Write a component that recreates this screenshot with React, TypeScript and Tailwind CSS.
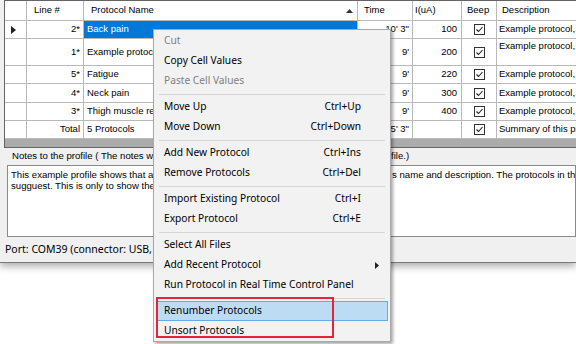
import React from "react";

type Row = {
  line: string;
  name: string;
  time: string;
  amp: string;
  desc: string;
  h: string;
  selected?: boolean;
  descTop?: boolean;
};

const rows: Row[] = [
  { line: "2*", name: "Back pain", time: "10' 3\"", amp: "100", desc: "Example protocol, not a real treatment", h: "h-[18px]", selected: true },
  { line: "1*", name: "Example protocol", time: "9'", amp: "200", desc: "Example protocol, not a real treatment", h: "h-[27px]", descTop: true },
  { line: "5*", name: "Fatigue", time: "9'", amp: "220", desc: "Example protocol, not a real treatment", h: "h-[18px]" },
  { line: "4*", name: "Neck pain", time: "9'", amp: "300", desc: "Example protocol, not a real treatment", h: "h-[19px]" },
  { line: "3*", name: "Thigh muscle relaxation", time: "9'", amp: "400", desc: "Example protocol, not a real treatment", h: "h-[18px]" },
];

type MenuEntry =
  | { sep: true }
  | { sep?: false; label: string; shortcut?: string; disabled?: boolean; sub?: boolean; hot?: boolean };

const menu: MenuEntry[] = [
  { label: "Cut", disabled: true },
  { label: "Copy Cell Values" },
  { label: "Paste Cell Values", disabled: true },
  { sep: true },
  { label: "Move Up", shortcut: "Ctrl+Up" },
  { label: "Move Down", shortcut: "Ctrl+Down" },
  { sep: true },
  { label: "Add New Protocol", shortcut: "Ctrl+Ins" },
  { label: "Remove Protocols", shortcut: "Ctrl+Del" },
  { sep: true },
  { label: "Import Existing Protocol", shortcut: "Ctrl+I" },
  { label: "Export Protocol", shortcut: "Ctrl+E" },
  { sep: true },
  { label: "Select All Files" },
  { label: "Add Recent Protocol", sub: true },
  { label: "Run Protocol in Real Time Control Panel" },
  { sep: true },
  { label: "Renumber Protocols", hot: true },
  { label: "Unsort Protocols" },
];

const cell = "border-r border-b border-[#b9b9b9] flex items-center overflow-hidden whitespace-nowrap shrink-0";

function Check() {
  return (
    <svg width="11" height="11" viewBox="0 0 11 11" className="shrink-0">
      <rect x="0.5" y="0.5" width="10" height="10" fill="#fff" stroke="#333" />
      <path d="M2.5 5.5 L4.5 7.5 L8.5 3" fill="none" stroke="#222" strokeWidth="1.1" />
    </svg>
  );
}

function GridRow({ r }: { r: Row }) {
  return (
    <div className={`flex ${r.h}`}>
      <div className={`${cell} w-[22px] justify-center bg-white`}>
        {r.selected && (
          <svg width="5" height="8" viewBox="0 0 5 8" className="ml-[-4px]">
            <path d="M0 0 L5 4 L0 8 Z" fill="#222" />
          </svg>
        )}
      </div>
      <div className={`${cell} w-[57px] justify-end pr-[3px]`}>{r.line}</div>
      <div className={`${cell} w-[274px] pl-[3px] ${r.selected ? "bg-[#0078d7] text-white" : ""}`}>{r.name}</div>
      <div className={`${cell} w-[55px] justify-end pr-[3px]`}>{r.time}</div>
      <div className={`${cell} w-[49px] justify-end pr-[4px]`}>{r.amp}</div>
      <div className={`${cell} w-[35px] justify-center`}>
        <Check />
      </div>
      <div className={`${cell} w-[120px] pl-[2px] ${r.descTop ? "items-start" : ""}`}>{r.desc}</div>
    </div>
  );
}

function ContextMenu() {
  return (
    <div className="absolute left-[153px] top-[29px] w-[238px] bg-[#f2f2f2] border border-[#a8a8a8] pt-[1px] shadow-[2px_2px_3px_rgba(0,0,0,0.35)] font-['Noto_Sans',sans-serif] text-[10.2px] text-black">
      {menu.map((m, i) =>
        m.sep ? (
          <div key={i} className="h-[6px] flex items-center px-[5px]">
            <div className="h-px w-full bg-[#d5d5d5]" />
          </div>
        ) : (
          <div key={i} className="h-[20px] px-[2px]">
            <div
              className={`h-full flex items-center pl-[7px] pr-[26px] border ${
                m.hot ? "bg-[#bcdcf4] border-[#6aa9e0]" : "border-transparent"
              } ${m.disabled ? "text-[#808080]" : ""} relative`}
            >
              <span className="flex-1">{m.label}</span>
              {m.shortcut && <span>{m.shortcut}</span>}
              {m.sub && (
                <svg width="4" height="7" viewBox="0 0 4 7" className="absolute right-[8px] top-[6px]">
                  <path d="M0 0 L4 3.5 L0 7 Z" fill="#222" />
                </svg>
              )}
            </div>
          </div>
        )
      )}
    </div>
  );
}

export default function App() {
  return (
    <div className="relative w-[576px] h-[344px] bg-white overflow-hidden">
      <div className="h-[263px] bg-[#f0f0f0] border-b border-[#7a7a7a] shadow-[0_3px_8px_rgba(0,0,0,0.35)] flex flex-col">
        {/* protocol grid */}
        <div className="ml-[4px] h-[148px] border-l border-t border-b border-[#646464] bg-[#ababab] flex flex-col font-['Liberation_Sans',Arial,sans-serif] text-[9.5px] text-black shrink-0">
          <div className="flex h-[20px] bg-white">
            <div className={`${cell} w-[22px]`} />
            <div className={`${cell} w-[57px] pl-[7px]`}>Line #</div>
            <div className={`${cell} w-[274px] pl-[7px] relative`}>
              Protocol Name
              <svg width="7" height="4" viewBox="0 0 7 4" className="absolute left-[262px] top-[8px]">
                <path d="M0 4 L3.5 0 L7 4 Z" fill="#333" />
              </svg>
            </div>
            <div className={`${cell} w-[55px] pl-[6px]`}>Time</div>
            <div className={`${cell} w-[49px] pl-[2px]`}>I(uA)</div>
            <div className={`${cell} w-[35px] pl-[5px]`}>Beep</div>
            <div className={`${cell} w-[120px] pl-[5px]`}>Description</div>
          </div>
          <div className="bg-white flex flex-col">
            {rows.map((r) => (
              <GridRow key={r.line} r={r} />
            ))}
            <div className="flex h-[18px]">
              <div className={`${cell} w-[22px]`} />
              <div className={`${cell} w-[57px] justify-end pr-[3px]`}>Total</div>
              <div className={`${cell} w-[274px] pl-[3px]`}>5 Protocols</div>
              <div className={`${cell} w-[55px] justify-end pr-[3px]`}>5' 3"</div>
              <div className={`${cell} w-[49px]`} />
              <div className={`${cell} w-[35px] justify-center`}>
                <Check />
              </div>
              <div className={`${cell} w-[120px] pl-[2px]`}>Summary of this profile</div>
            </div>
          </div>
        </div>

        {/* notes */}
        <div className="h-[17px] flex items-center pl-[12px] font-['Liberation_Sans',Arial,sans-serif] text-[9.6px] whitespace-nowrap shrink-0">
          <span className="w-[379px] overflow-hidden">Notes to the profile ( The notes will be saved together with the profile in the same</span>
          <span>file.)</span>
        </div>
        <div className="ml-[7px] h-[72px] border border-[#8a8a8a] bg-white px-[3px] pt-[3px] font-['Liberation_Sans',Arial,sans-serif] text-[9.6px] leading-[11px] whitespace-nowrap overflow-hidden shrink-0">
          <div className="flex">
            <span className="w-[381px] overflow-hidden shrink-0">This example profile shows that a profile can hold many protocols, each with it</span>
            <span>s name and description. The protocols in this profile are not real treatments</span>
          </div>
          <div>sugguest. This is only to show the features of the program.</div>
        </div>

        {/* status bar */}
        <div className="flex-1 flex items-center pl-[5px] pt-[1px] font-['Noto_Sans',sans-serif] text-[10.5px] whitespace-nowrap">
          Port: COM39 (connector: USB, speed: 115200)
        </div>
      </div>

      <ContextMenu />

      {/* annotation */}
      <div className="absolute left-[156px] top-[297px] w-[178px] h-[41px] border-2 border-[#e3243b]" />
    </div>
  );
}
